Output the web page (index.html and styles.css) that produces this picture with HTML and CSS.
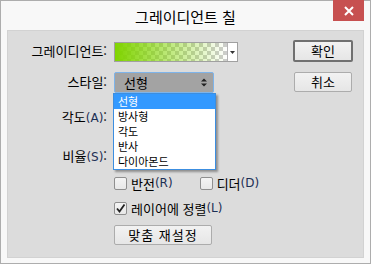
FILE: index.html
```html
<!DOCTYPE html>
<html lang="ko">
<head>
    <meta charset="UTF-8">
    <title>그레이디언트 칠</title>
    <link rel="stylesheet" href="styles.css">
</head>
<body>
    <div class="window">
        <div class="titlebar">
            <span class="title">그레이디언트 칠</span>
            <div class="close">
                <svg width="10" height="10" viewBox="0 0 10 10"><path d="M1 1L9 9M9 1L1 9" stroke="#fff" stroke-width="2"/></svg>
            </div>
        </div>

        <div class="panel">
            <div class="main">
                <div class="row row-gradient">
                    <span class="label">그레이디언트:</span>
                    <div class="picker">
                        <div class="swatch"></div>
                        <div class="picker-arrow">
                            <svg width="5" height="3" viewBox="0 0 5 3"><path d="M0 0H5L2.5 3Z" fill="#333"/></svg>
                        </div>
                    </div>
                </div>

                <div class="row row-style">
                    <span class="label">스타일:</span>
                    <div class="select">
                        <span>선형</span>
                        <svg width="6" height="9" viewBox="0 0 6 9"><path d="M3 0.5L6 3.5H0Z M3 8.5L0 5.5H6Z" fill="#222"/></svg>
                        <!-- open dropdown -->
                        <ul class="options">
                            <li class="selected">선형</li>
                            <li>방사형</li>
                            <li>각도</li>
                            <li>반사</li>
                            <li>다이아몬드</li>
                        </ul>
                    </div>
                </div>

                <div class="row row-angle">
                    <span class="label">각도<span class="key">(A)</span>:</span>
                    <div class="field"></div>
                    <span class="degree">°</span>
                </div>

                <div class="row row-scale">
                    <span class="label">비율<span class="key">(S)</span>:</span>
                </div>

                <div class="checks">
                    <label class="check"><span class="box"></span>반전<span class="key">(R)</span></label>
                    <label class="check check-dither"><span class="box"></span>디더<span class="key">(D)</span></label>
                </div>

                <label class="check check-align">
                    <span class="box">
                        <svg width="11" height="11" viewBox="0 0 11 11"><path d="M2 5.5L4.5 8.5L9.5 1.5" fill="none" stroke="#222" stroke-width="1.8"/></svg>
                    </span>레이어에 정렬<span class="key">(L)</span>
                </label>

                <button class="btn btn-reset">맞춤 재설정</button>
            </div>

            <div class="side">
                <button class="btn btn-ok">확인</button>
                <button class="btn btn-cancel">취소</button>
            </div>
        </div>
    </div>
</body>
</html>
```

FILE: styles.css
```css
* {
    box-sizing: border-box;
}

body {
    margin: 0;
    font-family: "Noto Sans CJK KR", sans-serif;
    font-size: 13px;
    color: #000;
}

.window {
    width: 371px;
    height: 264px;
    border: 1px solid #adadad;
    background: #f8f8f8;
    display: flex;
    flex-direction: column;
}

.titlebar {
    position: relative;
    height: 29px;
    display: flex;
    justify-content: center;
    align-items: center;
}

.title {
    font-size: 15px;
    line-height: 15px;
    padding-top: 1px;
}

.close {
    position: absolute;
    top: -1px;
    right: 6px;
    width: 31px;
    height: 21px;
    background: #c75050;
    display: flex;
    justify-content: center;
    align-items: center;
}

.panel {
    flex: 1;
    margin: 0 6px 5px;
    background: #dcdcdc;
    border: 1px solid #d2d2d2;
    display: flex;
}

.main {
    flex: 1;
    display: flex;
    flex-direction: column;
}

.row {
    display: flex;
    align-items: center;
    height: 21px;
}

.label {
    width: 99px;
    margin-right: 7px;
    text-align: right;
    line-height: 14px;
    padding-bottom: 2px;
}

.key {
    font-family: "DejaVu Sans", sans-serif;
    font-size: 12px;
    color: #1c2f55;
}

.row-gradient {
    margin-top: 11px;
    height: 20px;
}

.row-style {
    margin-top: 10px;
}

.row-angle {
    margin-top: 15px;
}

.row-scale {
    margin-top: 18px;
}

.picker {
    display: flex;
    width: 124px;
    height: 20px;
    border: 1px solid #a0a0a0;
    background: #fff;
}

.swatch {
    width: 113px;
    border-right: 1px solid #b4b4b4;
    background:
        linear-gradient(to right, #80d400, rgba(128, 212, 0, 0)),
        repeating-conic-gradient(#cdcdcd 0 25%, #fff 0 50%) 0 0 / 8px 8px;
}

.picker-arrow {
    flex: 1;
    display: flex;
    justify-content: center;
    align-items: center;
}

.select {
    position: relative;
    width: 100px;
    height: 21px;
    border: 1px solid #7eb4ea;
    border-radius: 2px;
    background: #a3a3a3;
    display: flex;
    align-items: center;
    justify-content: space-between;
    padding: 0 6px 0 9px;
    line-height: 14px;
}

.options {
    position: absolute;
    top: 20px;
    left: -2px;
    width: 103px;
    margin: 0;
    padding: 0;
    list-style: none;
    background: #fff;
    border: 1px solid #3c8ee0;
    box-shadow: 2px 2px 2px rgba(0, 0, 0, 0.35);
    z-index: 2;
}

.options li {
    height: 15px;
    font-size: 11px;
    line-height: 15px;
    padding-left: 4px;
}

.options .selected {
    background: #3399ff;
    color: #fff;
}

.field {
    width: 60px;
    height: 21px;
    margin-left: 20px;
    border: 1px solid #a3a3a3;
    background: #fff;
}

.degree {
    margin-left: 6px;
    margin-top: -6px;
    font-size: 12px;
}

.checks {
    display: flex;
    margin-top: 9px;
    margin-left: 106px;
}

.check {
    display: flex;
    align-items: center;
    height: 13px;
    line-height: 13px;
}

.check-dither {
    margin-left: 27px;
}

.check-align {
    margin-top: 12px;
    margin-left: 106px;
}

.box {
    width: 13px;
    height: 13px;
    margin-right: 4px;
    border: 1px solid #8f8f8f;
    border-radius: 2px;
    background: linear-gradient(#f4f4f4, #e8e8e8);
    display: flex;
    justify-content: center;
    align-items: center;
}

.btn {
    font-family: "Noto Sans CJK KR", sans-serif;
    font-size: 13px;
    line-height: 14px;
    padding: 0;
    border: 1px solid #acacac;
    border-radius: 2px;
    background: linear-gradient(#f2f2f2, #e6e6e6);
    color: #000;
}

.btn-reset {
    align-self: flex-start;
    width: 98px;
    height: 20px;
    margin-top: 10px;
    margin-left: 106px;
    letter-spacing: 1px;
}

.side {
    width: 70px;
    display: flex;
    flex-direction: column;
    padding-top: 9px;
}

.btn-ok {
    width: 60px;
    height: 22px;
    border: 2px solid #707070;
}

.btn-cancel {
    width: 58px;
    height: 20px;
    margin-top: 10px;
    margin-left: 1px;
}
```
